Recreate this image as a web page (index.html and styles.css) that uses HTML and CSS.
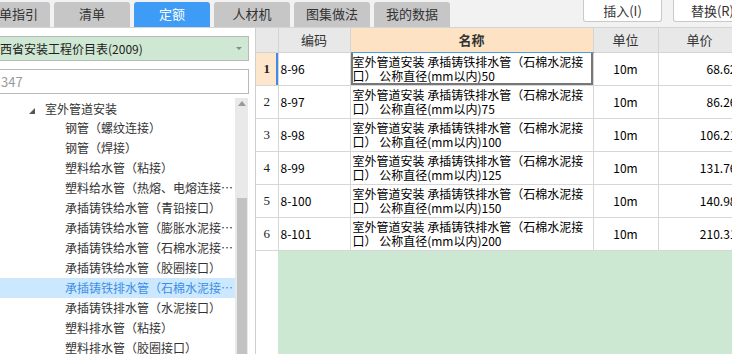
FILE: index.html
```html
<!DOCTYPE html>
<html lang="zh-CN">
<head>
    <meta charset="UTF-8">
    <title>定额</title>
    <link rel="stylesheet" href="styles.css">
</head>
<body>
    <!-- 顶部页签 -->
    <div class="topbar">
        <div class="tabs">
            <div class="tab">清单指引</div>
            <div class="tab">清单</div>
            <div class="tab on">定额</div>
            <div class="tab">人材机</div>
            <div class="tab">图集做法</div>
            <div class="tab">我的数据</div>
        </div>
        <div class="actions">
            <button class="btn">插入(I)</button>
            <button class="btn">替换(R)</button>
        </div>
    </div>

    <div class="main">
        <!-- 左侧定额库 -->
        <div class="side">
            <div class="select">江西省安装工程价目表(2009)<span class="caret"></span></div>
            <div class="search">347</div>
            <div class="tree_wrap">
                <ul class="tree">
                    <li class="node"><svg width="6" height="6" viewBox="0 0 6 6"><polygon points="6,0 6,6 0,6" fill="#555"/></svg>室外管道安装</li>
                    <li>钢管（螺纹连接）</li>
                    <li>钢管（焊接）</li>
                    <li>塑料给水管（粘接）</li>
                    <li>塑料给水管（热熔、电熔连接口）</li>
                    <li>承插铸铁给水管（青铅接口）</li>
                    <li>承插铸铁给水管（膨胀水泥接口）</li>
                    <li>承插铸铁给水管（石棉水泥接口）</li>
                    <li>承插铸铁给水管（胶圈接口）</li>
                    <li class="sel">承插铸铁排水管（石棉水泥接口）</li>
                    <li>承插铸铁排水管（水泥接口）</li>
                    <li>塑料排水管（粘接）</li>
                    <li>塑料排水管（胶圈接口）</li>
                </ul>
                <div class="scrollbar">
                    <span class="up"></span>
                    <span class="thumb"></span>
                </div>
            </div>
        </div>

        <!-- 右侧定额列表 -->
        <div class="grid_area">
            <table class="quota">
                <colgroup>
                    <col style="width:22px">
                    <col style="width:72px">
                    <col style="width:243px">
                    <col style="width:65px">
                    <col style="width:83px">
                </colgroup>
                <thead>
                    <tr>
                        <th></th>
                        <th>编码</th>
                        <th class="name">名称</th>
                        <th>单位</th>
                        <th>单价</th>
                    </tr>
                </thead>
                <tbody>
                    <tr class="cur">
                        <td class="no">1</td>
                        <td>8-96</td>
                        <td class="name">室外管道安装 承插铸铁排水管（石棉水泥接<br>口） 公称直径(mm以内)50</td>
                        <td class="unit">10m</td>
                        <td class="price">68.62</td>
                    </tr>
                    <tr>
                        <td class="no">2</td>
                        <td>8-97</td>
                        <td class="name">室外管道安装 承插铸铁排水管（石棉水泥接<br>口） 公称直径(mm以内)75</td>
                        <td class="unit">10m</td>
                        <td class="price">86.26</td>
                    </tr>
                    <tr>
                        <td class="no">3</td>
                        <td>8-98</td>
                        <td class="name">室外管道安装 承插铸铁排水管（石棉水泥接<br>口） 公称直径(mm以内)100</td>
                        <td class="unit">10m</td>
                        <td class="price">106.21</td>
                    </tr>
                    <tr>
                        <td class="no">4</td>
                        <td>8-99</td>
                        <td class="name">室外管道安装 承插铸铁排水管（石棉水泥接<br>口） 公称直径(mm以内)125</td>
                        <td class="unit">10m</td>
                        <td class="price">131.76</td>
                    </tr>
                    <tr>
                        <td class="no">5</td>
                        <td>8-100</td>
                        <td class="name">室外管道安装 承插铸铁排水管（石棉水泥接<br>口） 公称直径(mm以内)150</td>
                        <td class="unit">10m</td>
                        <td class="price">140.98</td>
                    </tr>
                    <tr>
                        <td class="no">6</td>
                        <td>8-101</td>
                        <td class="name">室外管道安装 承插铸铁排水管（石棉水泥接<br>口） 公称直径(mm以内)200</td>
                        <td class="unit">10m</td>
                        <td class="price">210.31</td>
                    </tr>
                </tbody>
            </table>
            <div class="blank">
                <div class="blank_num"></div>
                <div class="blank_fill"></div>
            </div>
        </div>
    </div>
</body>
</html>
```

FILE: styles.css
```css
*{
    box-sizing: border-box;
}
body{
    margin: 0;
    width: 732px;
    height: 354px;
    overflow: hidden;
    font-family: "Noto Sans CJK SC", "Liberation Sans", sans-serif;
    color: #333;
    background-color: #fff;
}
/* 顶部 */
.topbar{
    display: flex;
    height: 28px;
    background-color: #f2f2f2;
    border-bottom: 1px solid #d4d4d4;
}
.tabs{
    display: flex;
    align-items: flex-end;
    gap: 4px;
    margin-left: -26px;
}
.tab{
    width: 76px;
    height: 25px;
    line-height: 24px;
    text-align: center;
    font-size: 13px;
    background-color: #c6c6c6;
    border-radius: 3px 3px 0 0;
    color: #333;
}
.tab.on{
    background-color: #3e9bf6;
    color: #fff;
}
.actions{
    display: flex;
    gap: 11px;
    margin-left: auto;
    margin-right: -20px;
}
.btn{
    width: 79px;
    height: 22px;
    padding: 0;
    font-family: inherit;
    font-size: 13px;
    color: #333;
    background-color: #fff;
    border: 1px solid #c9c9c9;
    border-top: none;
    border-radius: 0 0 3px 3px;
}
.main{
    display: flex;
    height: 326px;
}
/* 左侧 */
.side{
    display: flex;
    flex-direction: column;
    width: 256px;
    flex-shrink: 0;
    padding-top: 8px;
    border-right: 1px solid #cfcfcf;
}
.select{
    display: flex;
    align-items: center;
    height: 25px;
    margin: 0 6px 0 -20px;
    padding-left: 7px;
    font-size: 12px;
    color: #222;
    background-color: #cfe8d3;
    border: 1px solid #b9b9b9;
}
.caret{
    margin-left: auto;
    margin-right: 6px;
    border-left: 3px solid transparent;
    border-right: 3px solid transparent;
    border-top: 3px solid #8a8a8a;
}
.search{
    height: 25px;
    line-height: 23px;
    margin: 8px 6px 0 -20px;
    padding-left: 20px;
    font-size: 13px;
    color: #9a9a9a;
    border: 1px solid #b9b9b9;
}
.tree_wrap{
    display: flex;
    flex: 1;
    min-height: 0;
    margin: 4px 7px 0 0;
    overflow: hidden;
}
.tree{
    flex: 1;
    min-width: 0;
    list-style: none;
    margin: 0;
    padding: 0;
}
.tree li{
    height: 20px;
    line-height: 20px;
    padding: 0 0 0 65px;
    font-size: 12px;
    color: #333;
    white-space: nowrap;
    overflow: hidden;
    text-overflow: ellipsis;
}
.tree li.node{
    padding-left: 29px;
    line-height: 21px;
}
.tree li.node svg{
    margin-right: 10px;
}
.tree li.sel{
    background-color: #cce8ff;
    color: #3c8fe6;
}
.scrollbar{
    display: flex;
    flex-direction: column;
    align-items: center;
    width: 13px;
    background-color: #e9e9e9;
}
.up{
    margin-top: 3px;
    border-left: 4px solid transparent;
    border-right: 4px solid transparent;
    border-bottom: 5px solid #9a9a9a;
}
.thumb{
    flex-shrink: 0;
    width: 10px;
    height: 170px;
    margin-top: 92px;
    background-color: #c2c2c2;
}
/* 右侧表格 */
.grid_area{
    display: flex;
    flex-direction: column;
    flex: 1;
    min-width: 0;
    overflow: hidden;
}
.quota{
    border-collapse: collapse;
    table-layout: fixed;
    width: 485px;
    font-size: 12px;
    color: #000;
}
.quota th{
    height: 24px;
    padding: 0;
    font-size: 13px;
    font-weight: normal;
    color: #333;
    background-color: #e8e8e8;
    border-right: 1px solid #d4d4d4;
    border-bottom: 1px solid #d4d4d4;
}
.quota th.name{
    font-weight: bold;
    background-color: #fde3c3;
    border-bottom-color: #4a9de9;
}
.quota td{
    height: 33px;
    padding: 0 2px;
    border-right: 1px solid #d6d6d6;
    border-bottom: 1px solid #d6d6d6;
    vertical-align: middle;
    white-space: nowrap;
}
.quota td.no{
    padding: 0;
    text-align: center;
    font-family: "Liberation Serif", serif;
    font-size: 13px;
    color: #222;
}
.quota td.name{
    line-height: 14px;
}
.quota td.unit{
    text-align: center;
}
.quota td.price{
    text-align: right;
    padding-right: 4px;
}
.quota tr.cur td.no{
    font-weight: bold;
    background-color: #fde6cb;
    box-shadow: inset -2px 0 #3b8ee8;
}
.quota tr.cur td.name{
    box-shadow: inset 2px 0 #777, inset -2px 0 #777, inset 0 -2px #777;
}
.blank{
    display: flex;
    flex: 1;
}
.blank_num{
    width: 22px;
}
.blank_fill{
    flex: 1;
    background-color: #cde8d2;
}
```
